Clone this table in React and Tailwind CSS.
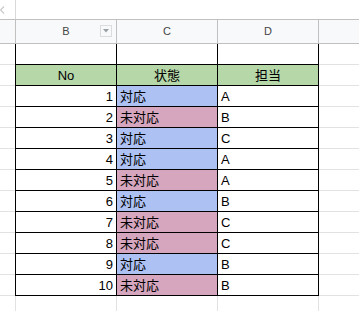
import React from "react";

const rows = [
  [1, "対応", "A"],
  [2, "未対応", "B"],
  [3, "対応", "C"],
  [4, "対応", "A"],
  [5, "未対応", "A"],
  [6, "対応", "B"],
  [7, "未対応", "C"],
  [8, "未対応", "C"],
  [9, "対応", "B"],
  [10, "未対応", "B"],
];

const font = {
  fontFamily: '"Liberation Sans", Arial, "Noto Sans CJK JP", sans-serif',
};

function TableRow({ b, c, d, cBg }) {
  return (
    <div className="flex h-[21px] text-[13px] leading-[15px] text-black">
      <div className="w-[15px] shrink-0 border-b border-[#e2e2e2] bg-white" />
      <div className="w-[102px] shrink-0 flex items-end justify-end pb-[2px] px-[3px] border-l border-r border-b border-black bg-white">
        {b}
      </div>
      <div
        className={`w-[101px] shrink-0 flex items-end pb-[2px] px-[3px] border-r border-b border-black ${cBg}`}
      >
        {c}
      </div>
      <div className="w-[101px] shrink-0 flex items-end pb-[2px] px-[3px] border-r border-b border-black bg-white">
        {d}
      </div>
      <div className="flex-1 border-b border-[#e2e2e2]" />
    </div>
  );
}

export default function App() {
  return (
    <div className="w-[359px] h-[311px] overflow-hidden bg-white" style={font}>
      {/* top strip */}
      <div className="flex h-[19px]">
        <div className="w-[15px] shrink-0 flex items-center">
          <svg width="5" height="8" viewBox="0 0 5 8" className="mt-[1px]">
            <path d="M4 0.5 L0.5 4 L4 7.5" stroke="#c8c8c8" strokeWidth="1.2" fill="none" />
          </svg>
        </div>
        <div className="w-[1px] bg-[#d9d9d9]" />
        <div className="flex-1" />
      </div>
      {/* column headers */}
      <div className="flex h-[25px] border-t border-b border-[#c0c0c0] bg-[#f8f9fa] text-[11px] text-[#444]">
        <div className="w-[15px] shrink-0" />
        <div className="relative w-[102px] shrink-0 flex items-center justify-center border-l border-r border-[#c0c0c0]">
          B
          <div className="absolute left-[84px] top-[5px] w-[12px] h-[12px] border border-[#dadce0] bg-[#f8f9fa] flex items-center justify-center">
            <svg width="6" height="4" viewBox="0 0 6 4">
              <path d="M0 0 L6 0 L3 3.5 Z" fill="#9aa0a6" />
            </svg>
          </div>
        </div>
        <div className="w-[101px] shrink-0 flex items-center justify-center border-r border-[#c0c0c0]">
          C
        </div>
        <div className="w-[101px] shrink-0 flex items-center justify-center border-r border-[#c0c0c0]">
          D
        </div>
        <div className="flex-1" />
      </div>
      {/* empty row */}
      <TableRow b="" c="" d="" cBg="bg-white" />
      {/* green header */}
      <div className="flex h-[21px] text-[13px] leading-[15px] text-black">
        <div className="w-[15px] shrink-0 border-b border-[#e2e2e2] bg-white" />
        <div className="w-[102px] shrink-0 flex items-end justify-center pb-[2px] border-l border-r border-b border-black bg-[#b6d7a8]">
          No
        </div>
        <div className="w-[101px] shrink-0 flex items-end justify-center pb-[2px] border-r border-b border-black bg-[#b6d7a8]">
          状態
        </div>
        <div className="w-[101px] shrink-0 flex items-end justify-center pb-[2px] border-r border-b border-black bg-[#b6d7a8]">
          担当
        </div>
        <div className="flex-1 border-b border-[#e2e2e2]" />
      </div>
      {rows.map(([n, s, p]) => (
        <TableRow
          key={n}
          b={n}
          c={s}
          d={p}
          cBg={s === "対応" ? "bg-[#adc2f2]" : "bg-[#d5a6bd]"}
        />
      ))}
      {/* trailing empty row */}
      <div className="flex h-[21px]">
        <div className="w-[15px] shrink-0 border-b border-[#e2e2e2]" />
        <div className="w-[102px] shrink-0 border-l border-r border-b border-[#e2e2e2]" />
        <div className="w-[101px] shrink-0 border-r border-b border-[#e2e2e2]" />
        <div className="w-[101px] shrink-0 border-r border-b border-[#e2e2e2]" />
        <div className="flex-1 border-b border-[#e2e2e2]" />
      </div>
    </div>
  );
}
